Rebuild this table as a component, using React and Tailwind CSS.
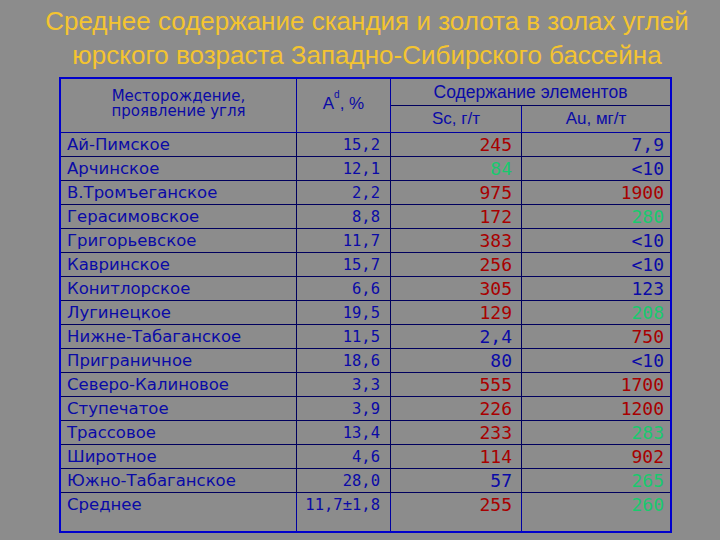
const rows = [
  ["Ай-Пимское", "15,2", ["245", "r"], ["7,9", "b"]],
  ["Арчинское", "12,1", ["84", "g"], ["<10", "b"]],
  ["В.Тромъеганское", "2,2", ["975", "r"], ["1900", "r"]],
  ["Герасимовское", "8,8", ["172", "r"], ["280", "g"]],
  ["Григорьевское", "11,7", ["383", "r"], ["<10", "b"]],
  ["Кавринское", "15,7", ["256", "r"], ["<10", "b"]],
  ["Конитлорское", "6,6", ["305", "r"], ["123", "b"]],
  ["Лугинецкое", "19,5", ["129", "r"], ["208", "g"]],
  ["Нижне-Табаганское", "11,5", ["2,4", "b"], ["750", "r"]],
  ["Приграничное", "18,6", ["80", "b"], ["<10", "b"]],
  ["Северо-Калиновое", "3,3", ["555", "r"], ["1700", "r"]],
  ["Ступечатое", "3,9", ["226", "r"], ["1200", "r"]],
  ["Трассовое", "13,4", ["233", "r"], ["283", "g"]],
  ["Широтное", "4,6", ["114", "r"], ["902", "r"]],
  ["Южно-Табаганское", "28,0", ["57", "b"], ["265", "g"]],
  ["Среднее", "11,7±1,8", ["255", "r"], ["260", "g"]],
];

const tone = {
  r: "text-[#a80000]",
  g: "text-[#19c96e]",
  b: "text-[#0a0aa6]",
};

function Row({ data, last }) {
  const [name, ad, sc, au] = data;
  const line = last ? "" : "border-b border-[#00005e]";
  const align = last ? "items-start pt-[1px]" : "items-center";
  return (
    <>
      <div className={`flex ${align} pl-[6px] border-r border-[#0000a0] ${line} text-[16.5px] text-[#0a0aa6] font-['DejaVu_Sans',sans-serif]`}>
        {name}
      </div>
      <div className={`flex ${align} justify-end pr-[10px] border-r border-[#0000a0] ${line} text-[15.5px] text-[#0a0aa6] font-['DejaVu_Sans_Mono',monospace]`}>
        {ad}
      </div>
      <div className={`flex ${align} justify-end pr-[9px] border-r border-[#0000a0] ${line} text-[18px] ${tone[sc[1]]} font-['DejaVu_Sans_Mono',monospace]`}>
        {sc[0]}
      </div>
      <div className={`flex ${align} justify-end pr-[6px] ${line} text-[18px] ${tone[au[1]]} font-['DejaVu_Sans_Mono',monospace]`}>
        {au[0]}
      </div>
    </>
  );
}

export default function App() {
  return (
    <div className="w-[720px] h-[540px] bg-[#8c8c8c] overflow-hidden font-['Liberation_Sans',sans-serif]">
      <h1 className="pt-[4px] pl-[14px] text-center text-[26px] leading-[34px] text-[#f4c430]">
        Среднее содержание скандия и золота в золах углей
        <br />
        юрского возраста Западно-Сибирского бассейна
      </h1>
      <div className="ml-[59px] mt-[5px] w-[613px] border-2 border-[#0000cc] grid grid-cols-[236px_94px_131px_148px] grid-rows-[27px_27px_repeat(15,24px)_38px] leading-[22px]">
        <div className="row-span-2 flex items-center justify-center border-r border-b border-[#0000a0] text-[15px] leading-[15px] text-center text-[#0a0aa6] pb-[3px] font-['DejaVu_Sans',sans-serif]">
          Месторождение,
          <br />
          проявление угля
        </div>
        <div className="row-span-2 flex items-center justify-center border-r border-b border-[#0000a0] text-[17px] text-[#0a0aa6] pb-[3px]">
          <span>
            A<sup className="text-[10px] align-[6px]">d</sup>, %
          </span>
        </div>
        <div className="col-span-2 flex items-center justify-center border-b border-[#00005e] text-[17.5px] text-[#0a0aa6]">
          Содержание элементов
        </div>
        <div className="flex items-center justify-center border-r border-b border-[#0000a0] text-[17px] text-[#0a0aa6]">
          Sc, г/т
        </div>
        <div className="flex items-center justify-center border-b border-[#0000a0] text-[17px] text-[#0a0aa6]">
          Au, мг/т
        </div>
        {rows.map((r, i) => (
          <Row key={r[0]} data={r} last={i === rows.length - 1} />
        ))}
      </div>
    </div>
  );
}
